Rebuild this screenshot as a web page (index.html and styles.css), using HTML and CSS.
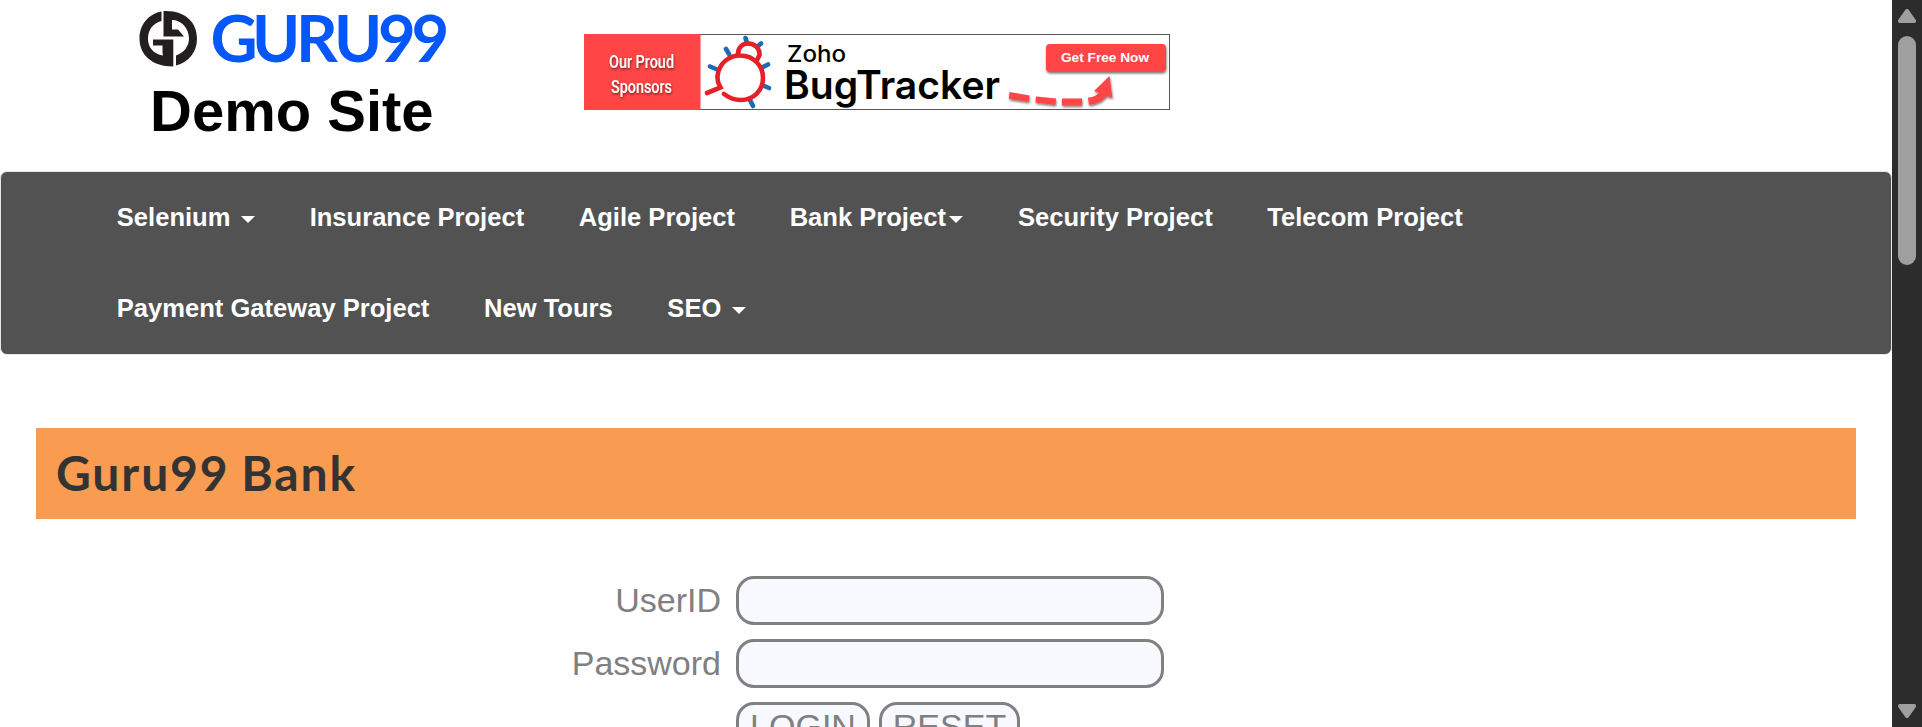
FILE: index.html
```html
<!DOCTYPE html>
<html lang="en">
<head>
<meta charset="utf-8">
<title>Guru99 Bank Home Page</title>
<link rel="stylesheet" href="styles.css">
</head>
<body>
<div class="page">
  <header class="header">
    <div class="brand">
      <svg class="logo" width="312" height="72" viewBox="138 0 312 72" role="img" aria-label="Guru99">
        <g fill="#231f20">
          <path d="M161.500 11.500C148 14 139.500 25 139.500 38.500C139.500 54 151 66.500 173.300 66.500V39.500H153V45.500H162.500V55.500C152 53 148 46.500 148 38.500C148 30 153 23 161.500 21Z"/>
          <path d="M163.500 11C186 10 197 23 197 38.500C197 52 189 62 176 65.500V55.500C184 53 189 46 189 38.500C189 28 181 20 172 20V29.500H178L184 36.500H163.500Z"/>
          <path d="M155.500 47L162.500 54V47Z" fill="#fff"/>
          <path d="M153 45H165.500V56L153 47Z"/>
          <path d="M153 45.500H162.500V55.500L153 49Z" fill="#fff"/>
          <path d="M172 20.500L180 23.500V28.500H172Z" fill="#fff"/>
        </g>
        <text class="logo-word" y="61.500" x="210.500 252 296 334 378 411.500">GURU99</text>
      </svg>
      <h1 class="demo">Demo Site</h1>
    </div>
    <svg class="banner" width="587" height="77" viewBox="584 34 587 77">
      <defs>
        <filter id="soft" x="-20%" y="-30%" width="140%" height="180%"><feDropShadow dx="0.500" dy="1.500" stdDeviation="1" flood-opacity=".55"/></filter>
      </defs>
      <rect x="584.500" y="34.500" width="585" height="75" fill="#fff" stroke="#555"/>
      <rect x="584" y="34" width="116.500" height="76" fill="#ff4545"/>
      <g class="sponsor" filter="url(#soft)">
        <text x="609" y="68" textLength="65" lengthAdjust="spacingAndGlyphs">Our Proud</text>
        <text x="611" y="93" textLength="61" lengthAdjust="spacingAndGlyphs">Sponsors</text>
      </g>
      <g fill="none" stroke-linecap="round">
        <path stroke="#1b6cb7" stroke-width="4.600" d="M747 43L745.500 38M757 47L761 43.500M729 54L726 49M716 69L710 66.500M763 67L768 64.500M763 85.500L769 88M750 100L753 106"/>
        <path stroke="#e42028" stroke-width="4.600" d="M707 93L720.500 87.500Q717 82 717.500 76C719 63 729 55.500 740 55.500C754 55.500 763 66 763 78C763 91 753 100 741 100C733 100 728 97 724 94M738 54C738 47 743 43.500 748 43.500C755 43.500 760 49 759.500 55L757 60"/>
      </g>
      <text class="zoho" x="787" y="62" textLength="59" lengthAdjust="spacingAndGlyphs">Zoho</text>
      <text class="tracker" x="784" y="99" textLength="216" lengthAdjust="spacingAndGlyphs">BugTracker</text>
      <g fill="#ff4545" filter="url(#soft)">
        <rect x="1046" y="44" width="120" height="28" rx="4"/>
        <path d="M1009.500 92L1029.500 95.500L1029 102L1009 99ZM1036 96.500L1056 98.500L1055.500 105L1035.500 102.500ZM1062 98.500H1082V105.500H1062ZM1088 97.500Q1095 97.500 1099 92.500L1094 91L1109.500 76L1112.500 98L1107 96Q1100 104 1089 105Z"/>
      </g>
      <text class="cta" x="1061" y="62" textLength="88" lengthAdjust="spacingAndGlyphs">Get Free Now</text>
    </svg>
  </header>

  <nav class="nav">
    <ul class="menu">
      <li>Selenium <b class="caret"></b></li>
      <li>Insurance Project</li>
      <li>Agile Project</li>
      <li>Bank Project<b class="caret"></b></li>
      <li>Security Project</li>
      <li>Telecom Project</li>
      <li>Payment Gateway Project</li>
      <li>New Tours</li>
      <li>SEO <b class="caret"></b></li>
    </ul>
  </nav>

  <h2 class="title">Guru99 Bank</h2>

  <form class="login">
    <label for="uid">UserID</label>
    <input class="field" id="uid" type="text">
    <label for="pw">Password</label>
    <input class="field" id="pw" type="password">
    <div class="actions">
      <button class="btn btn-login" type="button">LOGIN</button>
      <button class="btn btn-reset" type="button">RESET</button>
    </div>
  </form>
</div>
<div class="scrollbar">
  <svg width="18" height="14" viewBox="0 0 18 14"><path d="M9 2L16 12H2Z"/></svg>
  <div class="thumb"></div>
  <svg class="down" width="18" height="14" viewBox="0 0 18 14"><path d="M9 12L16 2H2Z"/></svg>
</div>
</body>
</html>
```
FILE: styles.css
```css
* { box-sizing: border-box; }
body {
  margin: 0;
  height: 727px;
  display: flex;
  overflow: hidden;
  background: #fff;
  font-family: "Liberation Sans", Arial, sans-serif;
}
.page { width: 1892px; height: 727px; overflow: hidden; }
.header { height: 171px; display: flex; }
.brand { width: 312px; margin: 0 134px 0 138px; }
.logo { display: block; }
.logo-word {
  font: 700 65px Lato, sans-serif;
  fill: #0557fb;
}
.demo { margin: 6px 0 0 12px; font-size: 58px; line-height: 66px; font-weight: 700; white-space: nowrap; }
.banner { margin-top: 34px; }
.sponsor { font: 500 19px Roboto, sans-serif; fill: #fff; }
.zoho { font: 500 23px Inter, sans-serif; }
.tracker { font: 600 39px Inter, sans-serif; }
.cta { font: 700 13px "Liberation Sans", sans-serif; fill: #fff; }

.nav {
  height: 184px;
  border: 1px solid #e7e7e7;
  border-radius: 7px;
  background: #525252;
  padding-left: 88.500px;
}
.menu { width: 1420px; margin: 0; padding: 0; list-style: none; display: flex; flex-wrap: wrap; }
.menu li {
  height: 91px;
  padding: 0 27.300px;
  line-height: 91px;
  font-size: 25.570px;
  font-weight: 700;
  color: #fff;
  white-space: nowrap;
}
.caret {
  display: inline-block;
  margin-left: 3.500px;
  vertical-align: middle;
  border: 7px solid transparent;
  border-top-color: #fff;
  border-bottom: 0;
}
.title {
  height: 91px;
  margin: 73px 36px 57px;
  padding-left: 20px;
  background: #f99b50;
  color: #333;
  font: 700 48px/89px Lato, sans-serif;
  letter-spacing: 1.900px;
  word-spacing: -2px;
}
.login {
  display: grid;
  grid-template-columns: 721px 428px;
  column-gap: 15px;
  row-gap: 14px;
  color: #808080;
  font-size: 34px;
}
.login label { text-align: right; line-height: 49px; }
.field, .btn {
  height: 49px;
  border: 3px solid #808080;
  border-radius: 18px;
  background: #f8f8ff;
  color: #808080;
  font: 34px "Liberation Sans", Arial, sans-serif;
  padding: 0;
}
.actions { grid-column: 2; display: flex; gap: 9px; }
.btn-login { width: 134px; }
.btn-reset { width: 141px; }

.scrollbar {
  width: 30px;
  padding: 9px 6px;
  background: #2c2c2c;
  display: flex;
  flex-direction: column;
}
.scrollbar path { fill: #9f9f9f; stroke: #9f9f9f; stroke-width: 4; stroke-linejoin: round; }
.thumb { height: 229px; margin-top: 13px; border-radius: 9px; background: #9f9f9f; }
.down { margin-top: auto; }
```
